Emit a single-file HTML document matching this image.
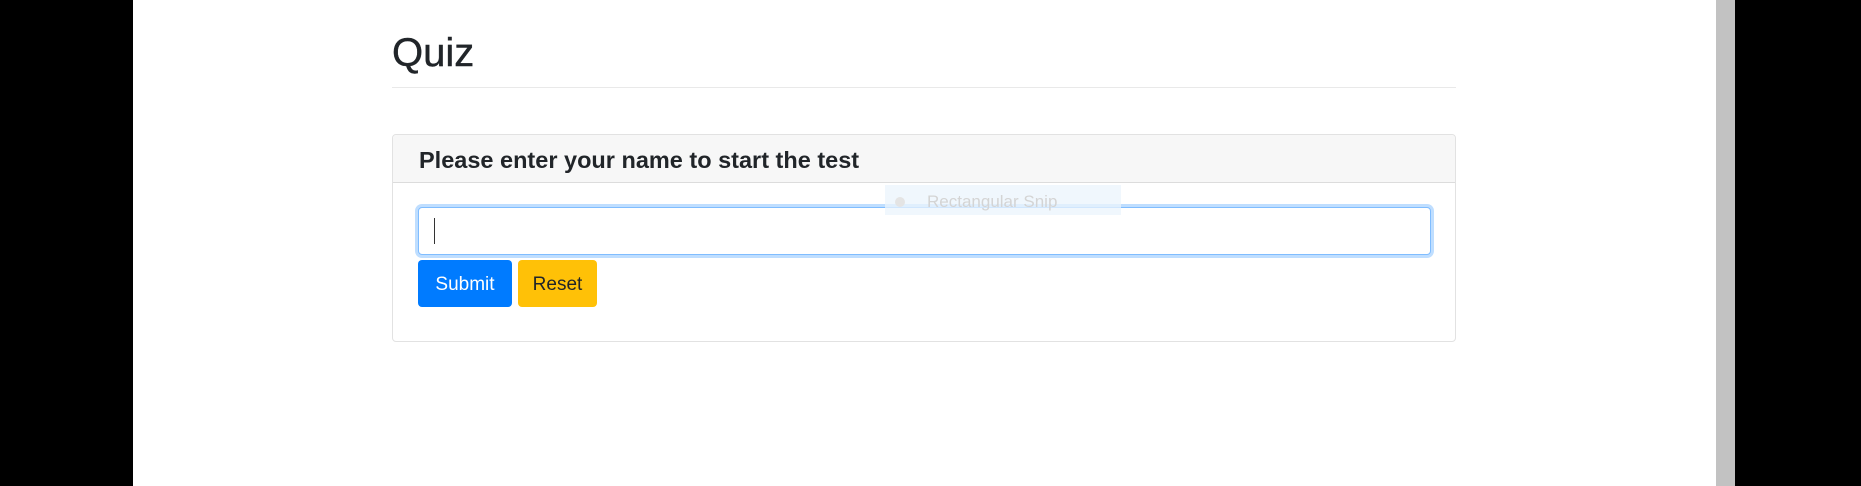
<!DOCTYPE html>
<html><head><meta charset="utf-8"><style>
*{margin:0;padding:0;box-sizing:border-box}
body{width:1861px;height:486px;background:#000;position:relative;overflow:hidden;font-family:"Liberation Sans",sans-serif;color:#212529}
.page{position:absolute;left:133px;top:0;width:1583px;height:486px;background:#fff}
.sb{position:absolute;left:1716px;top:0;width:19px;height:486px;background:#c2c2c2}
.h1{position:absolute;left:392px;top:29px;font-size:40px;line-height:48px;-webkit-text-stroke:0.4px #212529}
.hr{position:absolute;left:392px;top:87px;width:1064px;height:1px;background:#e9e9e9}
.card{position:absolute;left:392px;top:134px;width:1064px;height:208px;border:1px solid #e2e2e2;border-radius:4px}
.ch{height:48px;background:#f7f7f7;border-bottom:1px solid #dcdcdc;border-radius:4px 4px 0 0}
.ct{position:absolute;left:26px;top:10px;font-size:23.5px;font-weight:bold;line-height:30px}
.inp{position:absolute;left:418px;top:207px;width:1013px;height:48px;border:1px solid #80bdff;border-radius:4px;box-shadow:0 0 0 3px #bfdeff;background:#fff}
.caret{position:absolute;left:15px;top:10px;width:1px;height:26px;background:#333}
.btn{position:absolute;top:260px;height:47px;border-radius:4px;font-size:19px;line-height:49px;text-align:center}
.b1{left:418px;width:94px;background:#007bff;color:#fff}
.b2{left:518px;width:79px;background:#ffc107;color:#212529}
.snip{position:absolute;left:885px;top:185px;width:236px;height:30px;background:rgba(235,244,252,.75);font-size:17px;color:#d4d4d4;line-height:34px}
.snip i{position:absolute;left:10px;top:12px;width:10px;height:10px;border-radius:50%;background:#e4e4e4}
.snip span{position:absolute;left:42px}
</style></head><body>
<div class="page"></div>
<div class="sb"></div>
<div class="h1">Quiz</div>
<div class="hr"></div>
<div class="card"><div class="ch"><div class="ct">Please enter your name to start the test</div></div></div>
<div class="inp"><div class="caret"></div></div>
<div class="btn b1">Submit</div>
<div class="btn b2">Reset</div>
<div class="snip"><i></i><span>Rectangular Snip</span></div>
</body></html>
